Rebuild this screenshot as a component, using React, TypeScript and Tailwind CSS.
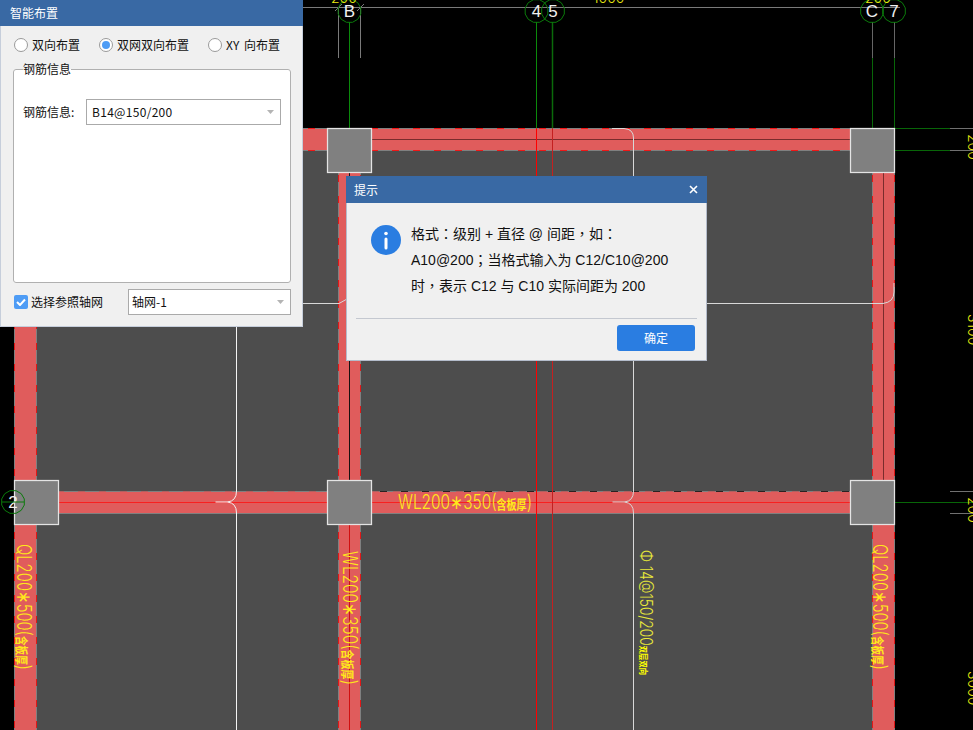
import React from 'react';

const YELLOW = '#ffe81a';
const BEAM = '#e05c5c';
const EDGE = '#808080';
const WHITE_LINE = '#d8d8d8';
const CAD_FONT = "Inter, 'Liberation Sans', sans-serif";

const AXES = [
  { label: 'B', x: 349.5, y: 11 },
  { label: '4', x: 536.5, y: 11 },
  { label: '5', x: 553, y: 11 },
  { label: 'C', x: 872, y: 11 },
  { label: '7', x: 894, y: 11 },
  { label: '2', x: 13, y: 502 },
];

const COLUMNS = [
  [327, 128],
  [850, 128],
  [14, 480],
  [327, 480],
  [850, 480],
];

const polygonPoints = (cx: number, cy: number, r: number) =>
  Array.from({ length: 12 }, (_, i) => {
    const a = (Math.PI / 6) * i + Math.PI / 12;
    return `${cx + r * Math.cos(a)},${cy + r * Math.sin(a)}`;
  }).join(' ');

// beam running left-right, y is the top edge
const HBeam = ({ x1, x2, y, dash }: { x1: number; x2: number; y: number; dash: string }) => (
  <g>
    <rect x={x1} y={y} width={x2 - x1} height={22} fill={BEAM} />
    <path d={`M${x1} ${y + 0.5}H${x2}M${x1} ${y + 22.5}H${x2}`} stroke={EDGE} />
    <path d={`M${x1} ${y + 0.5}H${x2}`} stroke={dash} strokeDasharray="7 14" />
    {y === 128 && <path d={`M${x1} ${y + 22.5}H${x2}`} stroke={dash} strokeDasharray="7 14" />}
  </g>
);

// beam running top-bottom, x is the left edge
const VBeam = ({ x, y1, y2 }: { x: number; y1: number; y2: number }) => (
  <g>
    <rect x={x} y={y1} width={22} height={y2 - y1} fill={BEAM} />
    <path d={`M${x + 0.5} ${y1}V${y2}M${x + 22.5} ${y1}V${y2}`} stroke={EDGE} />
    <path d={`M${x + 0.5} ${y1 + 4}V${y2}M${x + 22.5} ${y1 + 4}V${y2}`} stroke="#e01818" strokeDasharray="7 14" />
  </g>
);

const Fork = ({ x, color }: { x: number; color: string }) => (
  <path d={`M${x} 491Q${x} 501 ${x - 9} 502H${x - 21}M${x - 9} 502Q${x} 503 ${x} 513`} fill="none" stroke={color} />
);

// beam label with the small "including slab" note
const BeamLabel = ({ transform, text, length }: { transform: string; text: string; length: number }) => (
  <text
    transform={transform}
    fill={YELLOW}
    fontSize={20}
    fontWeight={300}
    fontFamily={CAD_FONT}
    textLength={length}
    lengthAdjust="spacingAndGlyphs"
  >
    {text}
    <tspan fontSize={13} fontWeight={700} fontFamily="'Noto Sans CJK SC', sans-serif">
      含板厚
    </tspan>
    )
  </text>
);

const Drawing = () => (
  <svg className="absolute inset-0" width={973} height={730} viewBox="0 0 973 730">
    <rect x={14} y={128} width={880} height={602} fill="#4d4d4d" />

    {/* grid lines above the slab */}
    <path d="M303 7.5H900M338.5 7V58M360.5 7V58M335 11L342 4M357 11L364 4" stroke="#7a7a7a" />
    <path d="M872.5 22V58M894.5 22V58" stroke="#666666" />
    <path d="M349.5 22V128M536.5 22V128" stroke="#0b8a0b" />
    <path d="M552.5 22V128" stroke="#0a6a0a" strokeWidth={1.5} />
    <path d="M872.5 58V128M894.5 58V128" stroke="#086608" />
    <path d="M894 128.5H950M894 150.5H950M894 502.5H973" stroke="#086608" />
    <path d="M950 128.5H973M950 150.5H973M950 491.5H973M950 513.5H973" stroke="#707070" />

    <HBeam x1={14} x2={872} y={128} dash="#f01818" />
    <HBeam x1={36} x2={872} y={491} dash="#b06060" />
    <path d="M380 491.5H850" stroke="#2a2222" strokeDasharray="7 14" />
    <VBeam x={14} y1={150} y2={730} />
    <VBeam x={338} y1={150} y2={730} />
    <VBeam x={872} y1={150} y2={730} />

    {/* beam centre lines */}
    <path d="M371 139.5H850M883.5 172V480" stroke="#7a2c2c" />
    <path d="M349.5 172V480" stroke="#1a1010" />
    <path d="M349.5 524V730" stroke="#d01010" />
    <path d="M58 502.5H850" stroke="#f82020" />
    <path d="M536.5 128V730" stroke="#ff0000" />
    <path d="M552.5 128V730" stroke="#c42020" />

    {/* white slab outline */}
    <path d="M236.5 327V491M236.5 513V730" stroke="#f4f4f4" />
    <path
      d="M612 128.5H624Q633.5 129 633.5 138V491M633.5 513V730M303 303.5H339L347 299M707 303.5H883Q894 302 894 292V283"
      fill="none"
      stroke={WHITE_LINE}
    />
    <Fork x={236.5} color="#f4f4f4" />
    <Fork x={633.5} color={WHITE_LINE} />

    {COLUMNS.map(([x, y]) => (
      <rect key={`${x}-${y}`} x={x + 0.5} y={y + 0.5} width={44} height={44} fill="#808080" stroke="#e4e4e4" strokeWidth={1.25} />
    ))}

    {AXES.map((a) => (
      <g key={a.label}>
        <polygon points={polygonPoints(a.x, a.y, 11.7)} fill="none" stroke="#0b7a0b" />
        <text x={a.x} y={a.y + 6} textAnchor="middle" fontSize={17} fill="#f0f0f0" fontFamily="'Liberation Sans', sans-serif">
          {a.label}
        </text>
      </g>
    ))}
    <path d="M2 502H24" stroke="#0b7a0b" />

    {/* beam labels */}
    <BeamLabel transform="translate(17 544) rotate(90)" text="QL200∗500(" length={126} />
    <BeamLabel transform="translate(343 551) rotate(90)" text="WL200∗350(" length={134} />
    <BeamLabel transform="translate(873 544) rotate(90)" text="QL200∗500(" length={126} />
    <BeamLabel transform="translate(398 509)" text="WL200∗350(" length={134} />
    <text
      transform="translate(640 550) rotate(90)"
      fill="#e8e83a"
      fontSize={17}
      fontWeight={300}
      fontFamily={CAD_FONT}
      textLength={125}
      lengthAdjust="spacingAndGlyphs"
    >
      Φ 14@150/200
      <tspan fontSize={9} fontWeight={700} fill="#ffff00" fontFamily="'Noto Sans CJK SC', sans-serif">
        双层双向
      </tspan>
    </text>

    {/* dimensions, cut by the edge of the view */}
    <g fill="#ecec10" fontSize={14} fontWeight={300} fontFamily={CAD_FONT}>
      <text x={331} y={3}>200</text>
      <text x={593} y={3}>1000</text>
      <text x={865} y={3}>200</text>
      <text transform="translate(968 134) rotate(90)">200</text>
      <text transform="translate(968 314) rotate(90)">3100</text>
      <text transform="translate(968 497) rotate(90)">200</text>
      <text transform="translate(968 671) rotate(90)">3000</text>
    </g>
  </svg>
);

const Radio = ({ checked = false }: { checked?: boolean }) => (
  <span className="flex h-[14px] w-[14px] shrink-0 items-center justify-center rounded-full border border-[#9a9a9a] bg-white">
    {checked && <span className="h-[8px] w-[8px] rounded-full bg-[#4e9cf5]" />}
  </span>
);

const ComboBox = ({ value, className }: { value: string; className: string }) => (
  <div className={`flex h-[26px] items-center border border-[#aaaaaa] bg-white pr-[6px] text-[12px] leading-[24px] text-[#111111] ${className}`}>
    <span>{value}</span>
    <svg className="ml-auto" width={7} height={4} viewBox="0 0 7 4">
      <path d="M0 0H7L3.5 4Z" fill="#b4b4b4" />
    </svg>
  </div>
);

const SettingsPanel = () => (
  <div className="absolute left-0 top-0 flex h-[327px] w-[303px] flex-col bg-[#f0f0f0] text-[12px] leading-[14px] text-[#111111]">
    <div className="flex h-[26px] shrink-0 items-center bg-[#3969a4] px-[10px] text-[12px] text-white">智能布置</div>
    <div className="flex flex-1 flex-col border-x border-b border-[#c6cedb] pl-[12px] pr-[11px] pt-[12px]">
      <div className="ml-px flex items-center">
        <Radio />
        <span className="ml-[4px] mr-[19px]">双向布置</span>
        <Radio checked />
        <span className="ml-[4px] mr-[19px]">双网双向布置</span>
        <Radio />
        <span className="ml-[4px] [word-spacing:2px]">XY 向布置</span>
      </div>
      <fieldset className="mt-[10px] h-[221px] rounded-[3px] border border-[#b0b0b0] bg-white pl-[9px] pr-[9px]">
        <legend className="px-0 leading-[14px]">钢筋信息</legend>
        <div className="mt-[23px] flex items-center">
          <span className="w-[63px] shrink-0">钢筋信息:</span>
          <ComboBox value="B14@150/200" className="w-[195px] pl-[5px] tracking-[0.3px]" />
        </div>
      </fieldset>
      <div className="mt-[6px] flex items-center">
        <span className="ml-px flex h-[14px] w-[14px] items-center justify-center rounded-[2px] bg-[#4e9cf5]">
          <svg width={10} height={8} viewBox="0 0 10 8">
            <path d="M1 4L4 7L9 1.5" fill="none" stroke="#ffffff" strokeWidth={2} />
          </svg>
        </span>
        <span className="ml-[3px]">选择参照轴网</span>
        <ComboBox value="轴网-1" className="ml-auto w-[163px] pl-[3px]" />
      </div>
    </div>
  </div>
);

// the reference centres its full-width punctuation
const Cn = ({ children }: { children: string }) => <span className="font-['Noto_Sans_CJK_TC',sans-serif] leading-none">{children}</span>;

const HintDialog = () => (
  <div className="absolute left-[346px] top-[176px] flex h-[185px] w-[361px] flex-col bg-[#f0f0f0] text-[#111111]">
    <div className="flex h-[27px] shrink-0 items-center justify-between bg-[#3969a4] pl-[8px] pr-[9px] text-[12px] text-white">
      <span>提示</span>
      <svg width={9} height={9} viewBox="0 0 9 9">
        <path d="M1 1L8 8M8 1L1 8" stroke="#ffffff" strokeWidth={1.6} />
      </svg>
    </div>
    <div className="flex flex-1 flex-col border-x border-b border-[#b4bccb]">
      <div className="mx-[9px] flex h-[116px] border-b border-[#c4c8d0] pl-[15px] pt-[18px]">
        <svg className="mt-[4px] shrink-0" width={30} height={30} viewBox="0 0 30 30">
          <circle cx={15} cy={15} r={15} fill="#2a7de1" />
          <circle cx={15} cy={8.5} r={1.8} fill="#ffffff" />
          <path d="M15 14V23" stroke="#ffffff" strokeWidth={3} strokeLinecap="round" />
        </svg>
        <div className="ml-[10px] whitespace-nowrap font-['Liberation_Sans','Noto_Sans_CJK_SC',sans-serif] text-[14px] leading-[26px]">
          <div>格式<Cn>：</Cn>级别 + 直径 @ 间距<Cn>，</Cn>如<Cn>：</Cn></div>
          <div>A10@200<Cn>；</Cn>当格式输入为 C12/C10@200</div>
          <div>时<Cn>，</Cn>表示 C12 与 C10 实际间距为 200</div>
        </div>
      </div>
      <div className="flex justify-end pr-[11px] pt-[6px]">
        <button className="h-[26px] w-[78px] rounded-[3px] bg-[#2a7de1] text-[12px] text-white">确定</button>
      </div>
    </div>
  </div>
);

const App = () => (
  <div className="relative h-[730px] w-[973px] overflow-hidden bg-black font-['Noto_Sans_CJK_SC','Liberation_Sans',sans-serif]">
    <Drawing />
    <SettingsPanel />
    <HintDialog />
  </div>
);

export default App;
